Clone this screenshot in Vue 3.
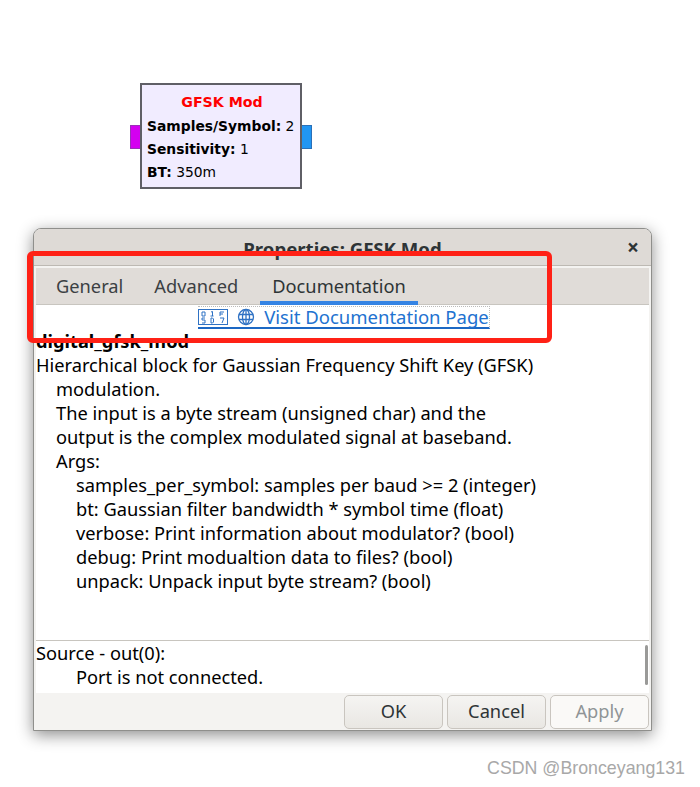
<script setup>
const doc = [
  { t: 'Hierarchical block for Gaussian Frequency Shift Key (GFSK)', l: 0 },
  { t: 'modulation.', l: 1 },
  { t: 'The input is a byte stream (unsigned char) and the', l: 1 },
  { t: 'output is the complex modulated signal at baseband.', l: 1 },
  { t: 'Args:', l: 1 },
  { t: 'samples_per_symbol: samples per baud >= 2 (integer)', l: 2 },
  { t: 'bt: Gaussian filter bandwidth * symbol time (float)', l: 2 },
  { t: 'verbose: Print information about modulator? (bool)', l: 2 },
  { t: 'debug: Print modualtion data to files? (bool)', l: 2 },
  { t: 'unpack: Unpack input byte stream? (bool)', l: 2 },
]
</script>

<template>
  <div class="page">
    <div class="block-row">
      <span class="port port-in"></span>
      <div class="block">
        <div class="block-title">GFSK Mod</div>
        <div class="param"><b>Samples/Symbol:</b> 2</div>
        <div class="param"><b>Sensitivity:</b> 1</div>
        <div class="param"><b>BT:</b> 350m</div>
      </div>
      <span class="port port-out"></span>
    </div>

    <div class="dialog">
      <div class="titlebar">
        <span class="title">Properties: GFSK Mod</span>
        <span class="close">×</span>
      </div>
      <div class="body">
        <div class="tabs">
          <span class="tab">General</span>
          <span class="tab">Advanced</span>
          <span class="tab active">Documentation</span>
        </div>
        <div class="pane">
          <div class="link-row">
            <a class="link">
              <span class="hex">
                <svg width="30" height="17" viewBox="0 0 30 17">
                  <rect x="0.5" y="0.5" width="29" height="15" fill="#fff" stroke="#2f72c4" />
                  <g fill="none" stroke="#2f72c4" stroke-width="1">
                    <path d="M4 3h3v4H4zM7 9H4v2h3v3H4" />
                    <path d="M13 3l1.500-.500V7M12.500 7h3M13 9v5M13 9h1.500l1 1v3l-1 1H13" />
                    <path d="M22 3h4M22 3v4M22 5h3M22 9h4l-2 5" />
                  </g>
                </svg>
              </span>
              <svg class="globe" width="18" height="18" viewBox="0 0 18 18" fill="none" stroke="#2f72c4" stroke-width="1.300">
                <circle cx="9" cy="9" r="7.500" />
                <ellipse cx="9" cy="9" rx="3.500" ry="7.500" />
                <path d="M9 1.500v15M2 6.500h14M2 11.500h14" />
              </svg>
              <span class="link-text">Visit Documentation Page</span>
            </a>
          </div>
          <div class="doc">
            <div class="doc-name">digital_gfsk_mod</div>
            <div v-for="line in doc" :key="line.t" :class="['doc-line', 'indent-' + line.l]">{{ line.t }}</div>
          </div>
        </div>
        <div class="errors">
          <div>Source - out(0):</div>
          <div class="indent-2">Port is not connected.</div>
          <span class="scroll"></span>
        </div>
      </div>
      <div class="actions">
        <button class="btn">OK</button>
        <button class="btn">Cancel</button>
        <button class="btn disabled">Apply</button>
      </div>
    </div>

    <div class="annotation"></div>
    <div class="watermark">CSDN @Bronceyang131</div>
  </div>
</template>

<style scoped>
.page {
  position: relative;
  width: 700px;
  height: 787px;
  overflow: hidden;
  background: #fff;
  font-family: "Noto Sans", "Open Sans", sans-serif;
  color: #000;
  padding-top: 83px;
  box-sizing: border-box;
}
.block-row {
  display: flex;
  align-items: center;
  margin-left: 130px;
  height: 106px;
}
.block {
  width: 162px;
  height: 106px;
  box-sizing: border-box;
  border: 2px solid #5f5f66;
  background: #f1ecff;
  padding: 6px 5px 0;
  font-family: "DejaVu Sans", sans-serif;
  font-size: 13.850px;
  line-height: 23px;
  white-space: nowrap;
}
.block-title {
  color: #ff0000;
  font-weight: 700;
  text-align: center;
  font-size: 14.200px;
  line-height: 22px;
  margin-bottom: 2px;
  padding-left: 2px;
}
.port {
  display: block;
  width: 10px;
  height: 24px;
  box-sizing: border-box;
  margin-top: 1px;
}
.port-in { background: #d400f0; border: 1px solid #9a30b8; border-right: 0; }
.port-out { background: #2196f3; border: 1px solid #2a70b8; border-left: 0; }
.dialog {
  margin: 39px 0 0 33px;
  width: 619px;
  height: 503px;
  box-sizing: border-box;
  border: 1px solid #8f8f8c;
  border-radius: 8px 8px 0 0;
  background: #f4f3f1;
  box-shadow: 0 4px 16px rgba(0, 0, 0, 0.45);
  display: flex;
  flex-direction: column;
}
.titlebar {
  height: 37px;
  flex: none;
  box-sizing: border-box;
  background: #dedad6;
  border-bottom: 1px solid #bdb9b3;
  border-radius: 7px 7px 0 0;
  display: flex;
  align-items: center;
  justify-content: center;
  position: relative;
  padding-top: 3px;
}
.title {
  font-size: 18.600px;
  font-weight: 700;
  color: #2e3436;
}
.close {
  position: absolute;
  right: 12px;
  top: 5px;
  font-size: 21px;
  line-height: 26px;
  font-weight: 700;
  color: #2e3436;
}
.body {
  flex: none;
  margin: 2px 2px 0;
}
.tabs {
  height: 37px;
  box-sizing: border-box;
  background: #e0dcd8;
  border-bottom: 1px solid #c8c5bf;
  display: flex;
  padding-left: 7px;
}
.tab {
  padding: 0 13px;
  margin-right: 5px;
  font-size: 18.250px;
  line-height: 36px;
  height: 37px;
  box-sizing: border-box;
  color: #3b4043;
}
.tab.active {
  border-bottom: 4px solid #3584e4;
  margin-left: 4px;
  padding: 0 12px;
  color: #2e3436;
}
.pane {
  height: 335px;
  background: #fff;
  border-bottom: 1px solid #c8c5bf;
}
.link-row {
  display: flex;
  justify-content: center;
  height: 24px;
  padding: 1px 0 0 3px;
  box-sizing: border-box;
}
.link {
  display: flex;
  align-items: center;
  gap: 9px;
  height: 20px;
  border-top: 1px dotted #bbb;
  border-right: 1px dotted #bbb;
  border-bottom: 2px solid #1c68c4;
  color: #2272d0;
  font-size: 18.500px;
  line-height: 20px;
  white-space: nowrap;
}
.link-text { margin-top: -1px; }
.hex { display: block; height: 17px; }
.hex svg, .globe { display: block; }
.doc { font-size: 18.250px; line-height: 24px; white-space: nowrap; }
.indent-1 { padding-left: 20px; }
.indent-2 { padding-left: 40px; }
.doc-name { font-weight: 700; }
.errors {
  height: 52px;
  background: #fff;
  position: relative;
  font-size: 18.250px;
  line-height: 24px;
  white-space: nowrap;
}
.scroll {
  position: absolute;
  right: 1px;
  top: 4px;
  width: 3px;
  height: 40px;
  border-radius: 2px;
  background: #9a9a98;
}
.actions {
  flex: 1;
  display: flex;
  justify-content: flex-end;
  align-items: center;
  gap: 4px;
  padding: 0 2px 0 0;
  min-height: 0;
}
.btn {
  width: 99px;
  height: 34px;
  box-sizing: border-box;
  border: 1px solid #c9c5bf;
  border-radius: 5px;
  background: linear-gradient(#f5f4f2, #e9e7e3);
  font-family: inherit;
  font-size: 18.250px;
  color: #2e3436;
  padding: 0 0 2px;
}
.btn.disabled {
  background: #faf9f7;
  color: #8f9496;
}
.annotation {
  position: absolute;
  left: 27px;
  top: 251px;
  width: 525px;
  height: 92px;
  box-sizing: border-box;
  border: 5px solid #ff2116;
  border-left-width: 6px;
  border-radius: 6px;
}
.watermark {
  position: absolute;
  right: 15px;
  top: 756px;
  font-family: "Liberation Sans", sans-serif;
  font-size: 17.800px;
  line-height: 24px;
  color: #a8a8a8;
  white-space: nowrap;
}
</style>
